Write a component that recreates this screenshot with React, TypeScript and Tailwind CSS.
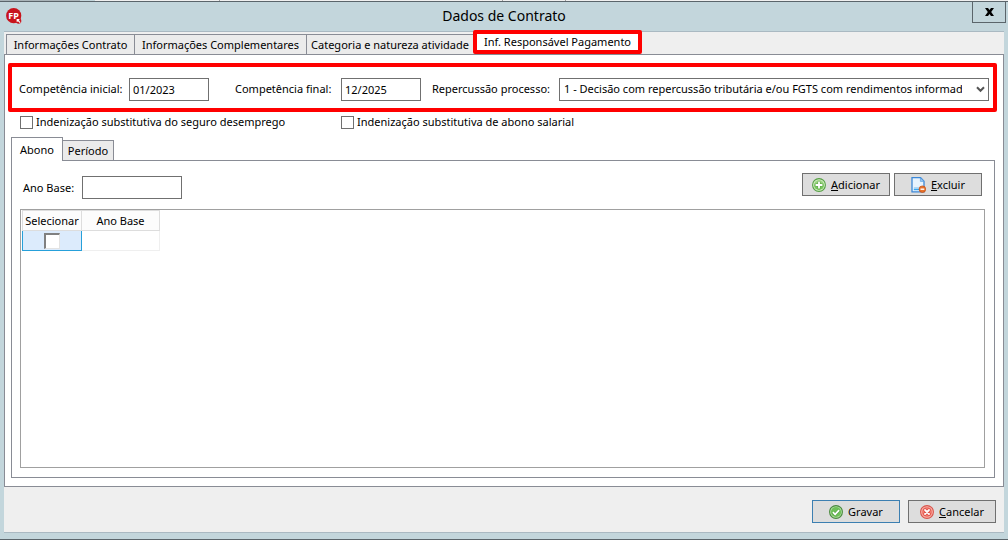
import React, { useState } from 'react';

const MAIN_TABS = [
    { id: 'contrato', label: 'Informações Contrato', width: 'w-[128px]' },
    { id: 'complementares', label: 'Informações Complementares', width: 'w-[172px]' },
    { id: 'categoria', label: 'Categoria e natureza atividade', width: 'w-[167px]' },
];

const AddIcon = () => (
    <svg width="14" height="14" viewBox="0 0 14 14" aria-hidden="true">
        <defs>
            <linearGradient id="addFill" x1="0" y1="0" x2="0" y2="1">
                <stop offset="0" stopColor="#a9da90" />
                <stop offset="1" stopColor="#6cc24e" />
            </linearGradient>
        </defs>
        <circle cx="7" cy="7" r="6.4" fill="#d9f2cd" stroke="#559f43" strokeWidth="1.1" />
        <circle cx="7" cy="7" r="5.1" fill="url(#addFill)" />
        <path d="M7 4.2v5.6M4.2 7h5.6" stroke="#5aa545" strokeWidth="3" strokeLinecap="round" />
        <path d="M7 4.2v5.6M4.2 7h5.6" stroke="#fff" strokeWidth="1.8" strokeLinecap="round" />
    </svg>
);

const RemoveIcon = () => (
    <svg width="15" height="16" viewBox="0 0 15 16" aria-hidden="true">
        <path d="M1 .7h8.6L13 4.2v10.6H1z" fill="#e8f3fd" stroke="#3c88d8" strokeWidth="1.3" />
        <path d="M9.4.9v3.5H13z" fill="#9ccaf5" stroke="#5c9fe0" strokeWidth=".7" />
        <path d="M2.8 12.4h6" stroke="#39a6ee" strokeWidth="1.6" />
        <path d="M2.8 10.6h6" stroke="#a9d5f7" strokeWidth="1" />
        <circle cx="11.4" cy="12.2" r="3.3" fill="#e8722c" stroke="#c34f12" strokeWidth=".7" />
        <path d="M9.5 12.2h3.8" stroke="#fff" strokeWidth="1.4" />
    </svg>
);

const CheckIcon = () => (
    <svg width="14" height="14" viewBox="0 0 14 14" aria-hidden="true">
        <circle cx="7" cy="7" r="6.4" fill="#b5dfa6" stroke="#4a8a3e" strokeWidth="1.1" />
        <circle cx="7" cy="7" r="5.1" fill="#6fc058" />
        <path d="M3.9 7.2l2.2 2.2 4-4.3" fill="none" stroke="#4b9a38" strokeWidth="2.8" />
        <path d="M3.9 7.2l2.2 2.2 4-4.3" fill="none" stroke="#fff" strokeWidth="1.8" />
    </svg>
);

const CancelIcon = () => (
    <svg width="14" height="14" viewBox="0 0 14 14" aria-hidden="true">
        <circle cx="7" cy="7" r="6.4" fill="#f8b8b0" stroke="#d9544b" strokeWidth="1.1" />
        <circle cx="7" cy="7" r="5.1" fill="#f17c71" />
        <path d="M5 5l4 4M9 5L5 9" stroke="#dc4a42" strokeWidth="3.2" strokeLinecap="round" />
        <path d="M5 5l4 4M9 5L5 9" stroke="#fff" strokeWidth="1.8" strokeLinecap="round" />
    </svg>
);

const AppLogo = () => (
    <svg width="16" height="16" viewBox="0 0 16 16" role="img" aria-label="FP">
        <circle cx="7.7" cy="7.7" r="7.6" fill="#c8141c" />
        <text x="7.6" y="10.6" textAnchor="middle" fontSize="9" fontWeight="700" fill="#fff">FP</text>
        <circle cx="12.6" cy="13" r="2.7" fill="#c8141c" />
        <path d="M11.4 11.8l2.8 2.9M11.2 13.8v-2.2h2.2" stroke="#fff" strokeWidth="1.2" fill="none" />
    </svg>
);

interface ActionButtonProps {
    icon: React.ReactNode;
    primary?: boolean;
    children: React.ReactNode;
}

const ActionButton: React.FC<ActionButtonProps> = ({ icon, primary, children }) => (
    <button
        type="button"
        className={`flex h-[23px] w-[88px] items-center justify-center gap-[5px] border bg-[#dddddd] ${primary ? 'border-[#3c7fb1]' : 'border-[#707070]'}`}
    >
        {icon}
        <span>{children}</span>
    </button>
);

interface CheckFieldProps {
    id: string;
    label: string;
}

const CheckField: React.FC<CheckFieldProps> = ({ id, label }) => (
    <div className="flex w-[321px] items-center gap-[3px]">
        <input id={id} type="checkbox" className="size-[13px] shrink-0 appearance-none border border-[#707070] bg-white checked:bg-[#3c7fb1]" />
        <label htmlFor={id}>{label}</label>
    </div>
);

export default function App() {
    const [inicial, setInicial] = useState('01/2023');
    const [final, setFinal] = useState('12/2025');
    const [anoBase, setAnoBase] = useState('');

    return (
        <div className="flex min-h-screen flex-col bg-white pb-[5px] font-['Noto_Sans',sans-serif] text-[11px] leading-4 whitespace-nowrap text-black">
            {/* sliver of the window behind */}
            <div className="flex h-px bg-[#f0f0f0]">
                <div className="w-[80px] bg-[#a9b4b9]" />
                <div className="w-[15px] bg-[#c3d6dc]" />
                <div className="w-[125px] border-r border-[#a0a0a0]" />
                <div className="w-[283px] border-r border-[#a0a0a0]" />
                <div className="w-[63px] border-r border-[#a0a0a0]" />
            </div>

            <div className="flex flex-1 flex-col border-y border-[#5b656b] bg-[#c3d6dc] px-1 pb-1.5">
                <header className="flex h-[29px] items-start">
                    <div className="w-8 pt-1.5 pl-[2px]">
                        <AppLogo />
                    </div>
                    <h1 className="flex-1 pt-1 text-center text-[14px] leading-5">Dados de Contrato</h1>
                    <button type="button" aria-label="Fechar" className="-mr-[2px] flex h-[21px] w-[34px] items-center justify-center border border-t-0 border-[#5b656b]">
                        <svg width="9" height="8" viewBox="0 0 9 8" aria-hidden="true">
                            <path d="M0 0h3l1.5 2L6 0h3L6.2 4 9 8H6L4.5 6 3 8H0l2.8-4z" fill="#000" />
                        </svg>
                    </button>
                </header>

                <main className="flex flex-1 flex-col border-y border-[#aab9c2] bg-[#efefef]">
                    <div role="tablist" className="relative z-10 flex h-[22px] items-end pl-[2px]">
                        {MAIN_TABS.map((tab) => (
                            <button
                                key={tab.id}
                                type="button"
                                role="tab"
                                aria-selected="false"
                                className={`h-5 ${tab.width} border border-r-0 border-b-0 border-[#898c95] bg-[#ebebeb]`}
                            >
                                {tab.label}
                            </button>
                        ))}
                        <button
                            type="button"
                            role="tab"
                            aria-selected="true"
                            className="h-6 w-[169px] rounded-xs border-4 border-[#ff0000] bg-white"
                        >
                            Inf. Responsável Pagamento
                        </button>
                    </div>

                    <section className="flex flex-1 flex-col border border-[#898c95] bg-white pr-2 pb-2 pl-[6px]">
                        <div className="-mr-[2px] -ml-[3px] mt-2 flex h-[49px] items-center rounded-xs border-4 border-[#ff0000] pt-[3px] pr-[4px] pl-[7px]">
                            <label htmlFor="inicial" className="w-[110px]">Competência inicial:</label>
                            <input
                                id="inicial"
                                value={inicial}
                                onChange={(e) => setInicial(e.target.value)}
                                className="h-[23px] w-20 border border-[#707070] bg-white px-[3px] outline-none"
                            />
                            <label htmlFor="final" className="ml-[26px] w-[106px]">Competência final:</label>
                            <input
                                id="final"
                                value={final}
                                onChange={(e) => setFinal(e.target.value)}
                                className="h-[23px] w-20 border border-[#707070] bg-white px-[3px] outline-none"
                            />
                            <label htmlFor="repercussao" className="ml-[11px] w-[127px]">Repercussão processo:</label>
                            <div className="relative min-w-0 flex-1">
                                <select
                                    id="repercussao"
                                    className="block h-[23px] w-full appearance-none border border-[#707070] bg-white pr-[26px] pl-1 outline-none"
                                >
                                    <option>1 - Decisão com repercussão tributária e/ou FGTS com rendimentos informados em S-2501</option>
                                </select>
                                <svg className="pointer-events-none absolute top-2 right-1" width="9" height="7" viewBox="0 0 9 7" aria-hidden="true">
                                    <path d="M1 1.2l3.5 3.6L8 1.2" fill="none" stroke="#555" strokeWidth="2" />
                                </svg>
                            </div>
                        </div>

                        <div className="flex h-[25px] items-start pt-[2px] pl-[9px]">
                            <CheckField id="seguro" label="Indenização substitutiva do seguro desemprego" />
                            <CheckField id="abono" label="Indenização substitutiva de abono salarial" />
                        </div>

                        <div role="tablist" className="relative z-10 -mb-px flex items-end">
                            <button type="button" role="tab" aria-selected="true" className="h-6 w-[52px] border border-b-0 border-[#898c95] bg-white">
                                Abono
                            </button>
                            <button type="button" role="tab" aria-selected="false" className="h-[21px] w-[51px] border border-l-0 border-[#898c95] bg-[#ebebeb]">
                                Período
                            </button>
                        </div>

                        <div className="flex flex-1 flex-col border border-[#898c95] pr-[9px] pb-[9px] pl-2">
                            <div className="flex justify-between pt-3 pr-[3px] pl-[3px]">
                                <div className="flex items-center pt-[3px]">
                                    <label htmlFor="anoBase" className="w-[59px]">Ano Base:</label>
                                    <input
                                        id="anoBase"
                                        value={anoBase}
                                        onChange={(e) => setAnoBase(e.target.value)}
                                        className="h-[23px] w-[100px] border border-[#707070] bg-white px-[3px] outline-none"
                                    />
                                </div>
                                <div className="flex gap-1">
                                    <ActionButton icon={<AddIcon />}><u>A</u>dicionar</ActionButton>
                                    <ActionButton icon={<RemoveIcon />}><u>E</u>xcluir</ActionButton>
                                </div>
                            </div>

                            <div className="mt-[10px] flex-1 border border-[#a0a0a0] pl-px">
                                <table className="table-fixed border-collapse">
                                    <thead>
                                        <tr className="h-5 bg-[#fcfcfc]">
                                            <th className="w-[59px] border border-[#dddddd] p-0 font-normal">Selecionar</th>
                                            <th className="w-[78px] border border-[#dddddd] p-0 font-normal">Ano Base</th>
                                        </tr>
                                    </thead>
                                    <tbody>
                                        <tr className="h-5">
                                            <td className="border border-[#26a0da] bg-[#dcebfc] p-0">
                                                <input
                                                    type="checkbox"
                                                    aria-label="Selecionar"
                                                    className="mx-auto block size-4 appearance-none border border-t-2 border-l-2 border-[#e3e3e3] border-t-[#808080] border-l-[#808080] bg-white checked:bg-[#3c7fb1]"
                                                />
                                            </td>
                                            <td className="border border-[#efefef] p-0" />
                                        </tr>
                                    </tbody>
                                </table>
                            </div>
                        </div>
                    </section>

                    <footer className="flex h-[45px] items-center justify-end gap-2 pt-[4px] pr-2">
                        <ActionButton icon={<CheckIcon />} primary>Gravar</ActionButton>
                        <ActionButton icon={<CancelIcon />}><u>C</u>ancelar</ActionButton>
                    </footer>
                </main>
            </div>
        </div>
    );
}
